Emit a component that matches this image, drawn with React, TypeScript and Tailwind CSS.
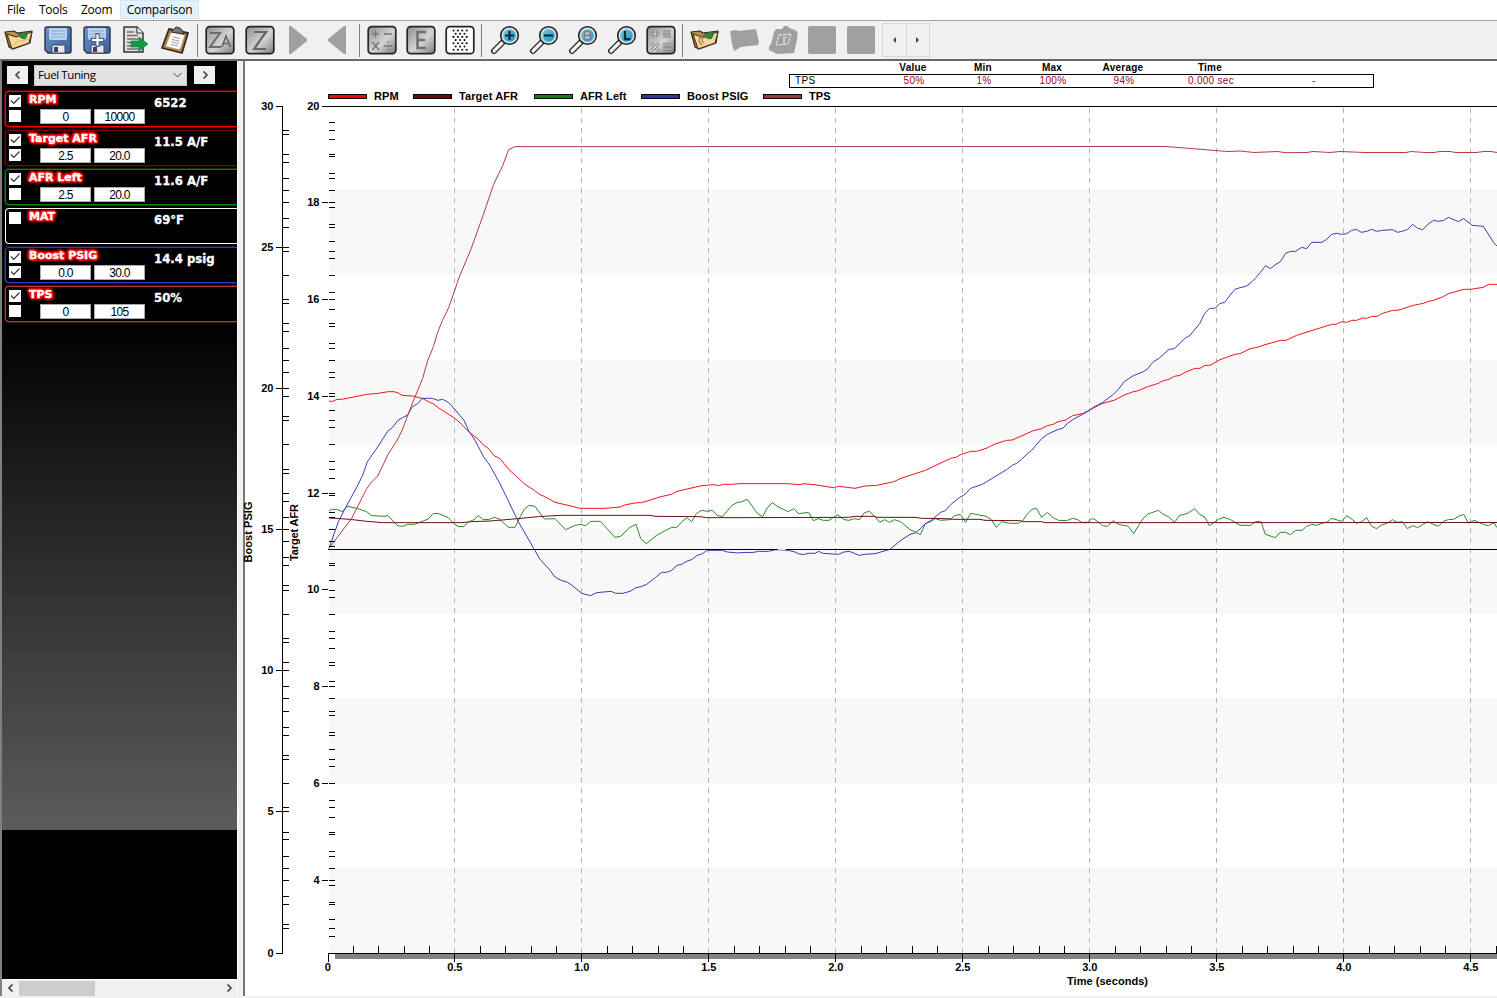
import React from "react";

type Pt = [number, number];

// Samples are stored in thirds of a pixel, relative to a local origin.
const seg = (ox: number, oy: number, flat: number[]): Pt[] => {
  const out: Pt[] = [];
  for (let i = 0; i < flat.length; i += 2) out.push([ox + flat[i] / 3, oy + flat[i + 1] / 3]);
  return out;
};

const rpm: Pt[] = [
  ...seg(325, 370, [12, 93, 20, 95, 34, 89, 56, 87, 125, 73, 160, 70, 190, 65, 207, 65, 220, 69, 231, 76, 262, 78, 292, 85, 310, 95, 324, 101, 340, 113, 388, 144, 410, 163, 432, 186, 460, 208, 475, 225, 490, 235, 507, 257, 524, 265, 552, 299, 600, 343, 628, 361, 645, 374, 658, 379, 690, 397, 738, 408, 765, 415, 840, 415, 886, 411, 902, 404, 937, 398, 950, 398, 1008, 380, 1040, 373, 1056, 364, 1130, 347, 1168, 344, 1180, 347, 1195, 343, 1222, 343, 1242, 341]),
  ...seg(740, 360, [0, 371, 140, 371, 180, 374, 190, 371, 222, 374, 280, 383, 296, 379, 345, 385, 375, 378, 410, 376, 462, 365, 480, 356, 556, 331, 632, 295, 648, 292, 662, 284, 692, 274, 710, 274, 741, 264, 765, 252, 800, 241, 817, 240, 880, 212, 905, 206, 922, 197, 940, 193, 954, 185, 975, 181, 998, 167, 1030, 160, 1060, 144, 1085, 131, 1122, 121, 1155, 104, 1180, 95, 1195, 92, 1225, 79]),
  ...seg(1150, 200, [0, 558, 25, 550, 40, 542, 57, 538, 73, 529, 90, 526, 105, 517, 135, 505, 150, 505, 165, 496, 180, 496, 210, 479, 255, 463, 270, 461, 300, 446, 322, 442, 345, 434, 392, 421, 408, 421, 440, 406, 545, 373, 558, 373, 575, 365, 590, 367, 605, 361, 620, 361, 637, 354, 650, 355, 665, 349, 682, 349, 695, 341, 728, 331, 743, 331, 790, 316, 820, 310, 835, 304, 850, 301, 880, 290, 895, 281, 942, 268, 962, 268, 1000, 262, 1016, 253, 1041, 253]),
];

const targetAfr: Pt[] = [
  ...seg(325, 370, [12, 444, 75, 448, 125, 454, 175, 458, 410, 458, 440, 455, 495, 453, 555, 448, 640, 440, 705, 436, 975, 436, 990, 439, 1125, 440, 1145, 443, 1242, 443]),
  ...seg(740, 360, [0, 473, 325, 472, 345, 469, 405, 469, 410, 472, 525, 472, 545, 475, 620, 476, 640, 478, 720, 478, 735, 481, 840, 482, 850, 485, 905, 485, 915, 488, 1242, 488]),
  [1497, 522.5],
];

const afrLeft: Pt[] = [
  ...seg(325, 370, [12, 423, 20, 418, 35, 418, 52, 425, 66, 409, 95, 415, 125, 425, 140, 437, 180, 439, 188, 436, 218, 467, 234, 469, 248, 463, 268, 463, 310, 447, 325, 430, 342, 431, 370, 443, 390, 464, 402, 470, 417, 470, 430, 456, 447, 449, 460, 437, 475, 449, 492, 448, 508, 442, 523, 447, 550, 472, 570, 472, 586, 440, 598, 417, 613, 406, 630, 409, 658, 447, 690, 446, 722, 479, 748, 467, 765, 463, 782, 467, 797, 454, 826, 454, 870, 502, 887, 499, 915, 472, 933, 463, 947, 506, 964, 521, 995, 496, 1040, 472, 1055, 472, 1070, 456, 1086, 443, 1100, 455, 1115, 430, 1130, 421, 1147, 424, 1162, 421, 1177, 436, 1192, 440, 1222, 405, 1240, 396]),
  ...seg(740, 360, [0, 427, 22, 418, 52, 460, 68, 470, 82, 443, 97, 428, 115, 441, 145, 455, 161, 446, 176, 461, 206, 457, 220, 482, 235, 476, 250, 481, 267, 481, 293, 464, 312, 479, 327, 481, 343, 476, 359, 479, 373, 458, 388, 454, 405, 470, 419, 487, 434, 479, 448, 487, 463, 479, 482, 485, 510, 509, 541, 524, 556, 491, 572, 485, 586, 476, 602, 481, 630, 479, 645, 467, 661, 463, 677, 487, 692, 460, 738, 469, 753, 478, 769, 502, 785, 485, 810, 490, 835, 490, 848, 483, 860, 464, 876, 448, 889, 445, 905, 472, 922, 457, 938, 472, 955, 481, 980, 482, 998, 475, 1013, 479, 1025, 487, 1042, 487, 1057, 475, 1070, 482, 1087, 497, 1102, 499, 1120, 482, 1135, 493, 1165, 499, 1181, 521, 1196, 496, 1210, 475, 1225, 461]),
  ...seg(1150, 200, [0, 940, 25, 931, 40, 943, 55, 950, 74, 967, 88, 947, 115, 939, 134, 926, 149, 943, 165, 952, 178, 977, 205, 958, 222, 952, 242, 959, 270, 976, 302, 976, 316, 965, 333, 965, 346, 1003, 376, 1013, 391, 997, 407, 997, 421, 1004, 437, 991, 456, 991, 470, 979, 485, 973, 500, 976, 515, 970, 530, 967, 545, 955, 575, 964, 590, 947, 608, 959, 619, 970, 635, 965, 650, 953, 665, 979, 680, 986, 695, 975, 713, 969, 727, 959, 741, 967, 757, 965, 772, 986, 788, 977, 803, 983, 832, 965, 865, 979, 880, 964, 895, 959, 911, 958, 925, 949, 941, 943, 956, 970, 972, 961, 1000, 973, 1015, 977, 1032, 968, 1041, 983]),
];

const boost: Pt[] = [
  ...seg(325, 370, [12, 535, 40, 455, 66, 405, 95, 352, 113, 316, 127, 275, 158, 231, 188, 184, 203, 172, 218, 152, 232, 143, 247, 136, 262, 110, 278, 101, 292, 85, 322, 85, 338, 91, 353, 88, 370, 97, 390, 119, 417, 151, 432, 184, 450, 211, 476, 261, 492, 282, 525, 341, 580, 455, 645, 568, 672, 597, 690, 621, 708, 631, 728, 637, 745, 649, 770, 670, 796, 677, 815, 668, 858, 664, 872, 670, 893, 670, 915, 664, 933, 653, 948, 650, 965, 643, 992, 622, 1010, 607, 1025, 607, 1040, 601, 1056, 586, 1070, 583, 1085, 574, 1102, 568, 1115, 557, 1132, 551, 1147, 541, 1192, 541, 1207, 546, 1240, 549]),
  ...seg(740, 360, [0, 578, 42, 577, 55, 574, 85, 574, 108, 569, 145, 571, 165, 576, 175, 581, 190, 584, 205, 580, 225, 580, 236, 574, 248, 580, 295, 583, 312, 576, 328, 574, 343, 580, 358, 586, 375, 583, 405, 581, 450, 568, 480, 543, 510, 523, 525, 519, 540, 507, 556, 491, 573, 481, 602, 457, 616, 452, 632, 434, 655, 415, 675, 403, 692, 385, 727, 373, 800, 329, 817, 316, 830, 310, 845, 298, 860, 283, 875, 271, 905, 236, 922, 223, 955, 208, 968, 205, 983, 190, 998, 179, 1042, 155, 1060, 142, 1087, 128, 1120, 103, 1135, 88, 1153, 65, 1180, 47, 1210, 35, 1225, 25]),
  ...seg(1150, 200, [0, 497, 12, 484, 27, 475, 57, 448, 73, 446, 105, 415, 120, 406, 149, 371, 164, 340, 179, 325, 195, 325, 209, 311, 224, 307, 240, 286, 255, 268, 270, 263, 288, 259, 302, 249, 318, 233, 347, 197, 361, 206, 375, 195, 391, 185, 407, 160, 422, 154, 437, 154, 455, 142, 470, 146, 485, 127, 516, 127, 530, 118, 545, 103, 560, 100, 575, 103, 590, 101, 605, 91, 619, 88, 634, 97, 650, 94, 665, 88, 680, 94, 697, 91, 727, 89, 743, 97, 757, 94, 773, 88, 788, 73, 803, 85, 818, 89, 834, 73, 851, 61, 866, 64, 881, 61, 895, 52, 925, 65, 941, 56, 967, 76, 1000, 79, 1031, 128, 1041, 138]),
];

const tps: Pt[] = [
  ...seg(325, 370, [12, 535, 80, 445, 125, 356, 140, 336, 158, 318, 190, 252, 215, 213, 232, 180, 258, 110]),
  ...seg(240, 60, [548, 955, 563, 902, 580, 860, 593, 817, 607, 782, 626, 743, 640, 703, 657, 653, 693, 567, 730, 464, 761, 373, 788, 317, 806, 269, 824, 260]),
  [1165, 146.5], [1185, 148], [1215, 150.5], [1228, 151.5], [1240, 151], [1254, 152.5], [1278, 151.5], [1285, 152.7], [1307, 152.5], [1313, 151.5], [1330, 152.5], [1340, 151.5], [1365, 152.5], [1406, 152.5], [1411, 151.5], [1425, 152.5], [1434, 152.5], [1440, 151.5], [1450, 151.5], [1456, 152.5], [1476, 152.5], [1484, 151.5], [1491, 151.5], [1497, 152.5],
];

const traces = [
  { color: "#f0141e", pts: rpm },
  { color: "#2c8a2c", pts: afrLeft },
  { color: "#6e0f14", pts: targetAfr },
  { color: "#3c3cb4", pts: boost },
  { color: "#b43c46", pts: tps },
];

const range = (n: number) => Array.from({ length: n }, (_, i) => i);
const TOP = 106;
const px = (v: number) => Math.floor(v) + 0.5;

function Chart() {
  return (
    <svg width="1252" height="890" viewBox="245 106 1252 890" className="block shrink-0 overflow-visible font-['Liberation_Sans',sans-serif] text-[11px] font-bold">
      {[1, 3, 5, 7, 9].map((i) => (
        <rect key={i} x="329" y={Math.floor(TOP + i * 84.7)} width="1168" height="85" fill="#f8f8f8" />
      ))}
      <rect x="335" y="954" width="1162" height="5" fill="#848284" />
      {range(9).map((i) => (
        <line key={i} x1={px(454.5 + i * 127)} x2={px(454.5 + i * 127)} y1="108" y2="953" stroke="#b4b4b4" strokeDasharray="5 5" />
      ))}
      {traces.map((t) => (
        <polyline key={t.color} points={t.pts.map((p) => p.join(",")).join(" ")} fill="none" stroke={t.color} strokeWidth="1" />
      ))}
      <g stroke="#000" shapeRendering="crispEdges">
        <path d="M322 106.5H1497M328 549.5H1497M328 953.5H1497M282.5 106V954" />
        {range(7).map((i) => (
          <line key={i} x1="276" x2="283" y1={px(TOP + i * 141.17)} y2={px(TOP + i * 141.17)} />
        ))}
        {range(34).map((i) => (
          <line key={i} x1="283" x2="289" y1={px(130.2 + i * 24.2)} y2={px(130.2 + i * 24.2)} />
        ))}
        {range(29).map((i) => (
          <line key={i} x1="283" x2="289" y1={px(134.24 + i * 28.23)} y2={px(134.24 + i * 28.23)} />
        ))}
        {range(9).map((i) => (
          <line key={i} x1="322" x2="328" y1={px(TOP + i * 96.75)} y2={px(TOP + i * 96.75)} />
        ))}
        {range(34).map((i) => (
          <line key={i} x1="329" x2="335" y1={px(130.2 + i * 24.2)} y2={px(130.2 + i * 24.2)} />
        ))}
        {range(49).map((i) => (
          <line key={i} x1="329" x2="335" y1={px(122.94 + i * 16.94)} y2={px(122.94 + i * 16.94)} />
        ))}
        {range(47).map((i) => {
          const x = Math.max(328.5, px(327.9 + i * 25.4));
          return i % 5 === 0 ? <line key={i} x1={x} x2={x} y1="953" y2="962" /> : <line key={i} x1={x} x2={x} y1="946" y2="953" />;
        })}
      </g>
      <path d="M778 549.5H786" stroke="#e0e08c" />
      {range(7).map((i) => (
        <text key={i} x="273.5" y={Math.floor(TOP + i * 141.17) + 4} textAnchor="end">{30 - i * 5}</text>
      ))}
      {range(9).map((i) => (
        <text key={i} x="319.500" y={Math.floor(TOP + i * 96.75) + 4} textAnchor="end">{20 - i * 2}</text>
      ))}
      {range(10).map((i) => (
        <text key={i} x={327.8 + i * 127} y="971" textAnchor="middle">{i === 0 ? "0" : (i / 2).toFixed(1)}</text>
      ))}
      <text x="1107.5" y="985" textAnchor="middle" textLength="81">Time (seconds)</text>
      <text transform="translate(252 532) rotate(-90)" textAnchor="middle" textLength="61">Boost PSIG</text>
      <text transform="translate(298 532.5) rotate(-90)" textAnchor="middle" textLength="57">Target AFR</text>
    </svg>
  );
}

const Svg = ({ children }: { children: React.ReactNode }) => (
  <div className="flex w-[39px] justify-center">
    <svg width="30" height="30" viewBox="0 0 30 30" className="block">{children}</svg>
  </div>
);

const Folder = ({ swirl = false }: { swirl?: boolean }) => (
  <Svg>
    <path d="M1 7L10 6L13 8L28 6L26 18L9 24L5 22Z" fill="#b98f4c" stroke="#33291a" strokeWidth="1.200" strokeLinejoin="round" />
    <path d="M3 9L12 12L28 7L25 18L8 24Z" fill="#fcd69a" stroke="#4c3820" strokeWidth="1.100" strokeLinejoin="round" />
    <path d="M14 8L20 9L23 7L23 11L21 14L17 13Z" fill="#159447" stroke="#0c5a2c" strokeWidth=".6" />
    {swirl ? <path d="M17 11C9 9 7 16 12 20M18 13C12 11 10 15 14 18" fill="none" stroke="#8a6c48" strokeWidth="1.100" /> : <path d="M9 23L12 17L25 14" fill="none" stroke="#e0ac62" strokeWidth=".8" />}
  </Svg>
);

const Save = ({ plus = false }: { plus?: boolean }) => (
  <Svg>
    <path d="M4 2H26Q28 2 28 4V26Q28 28 26 28H5L2 25V4Q2 2 4 2Z" fill="url(#blue)" stroke="#26344c" strokeWidth="1.400" />
    <path d="M6 3H24V13Q24 15 22 15H8Q6 15 6 13Z" fill="#b9d2ee" />
    <path d="M8 6H22M8 9H22M8 12H22" stroke="#8eacd0" />
    <path d="M9 20H22V28H9Z" fill="#e6e6e6" stroke="#3a4a68" />
    <rect x="11" y="22" width="4" height="5" fill="#2b4470" />
    {plus && <path d="M15.500 8V22M8.500 15H22.500" stroke="#4a628c" strokeWidth="4.200" />}
    {plus && <path d="M15.500 9.500V20.500M10 15H21" stroke="#fff" strokeWidth="2.200" />}
  </Svg>
);

const Tile = ({ children, white = false }: { children: React.ReactNode; white?: boolean }) => (
  <Svg>
    <rect x="1.200" y="1.700" width="27.600" height="27" rx="3.500" fill={white ? "#fff" : "url(#steel)"} stroke="#242424" strokeWidth="1.700" />
    {children}
  </Svg>
);

const Magnifier = ({ children }: { children: React.ReactNode }) => (
  <Svg>
    <path d="M12 18L4 26" stroke="#222" strokeWidth="6" strokeLinecap="round" />
    <path d="M12 18L4 26" stroke="#f4f4f4" strokeWidth="3.200" strokeLinecap="round" />
    <circle cx="19.500" cy="10.500" r="8.800" fill="#d6e2e8" stroke="#222" strokeWidth="1.600" />
    <circle cx="19.500" cy="10.500" r="6.300" fill="url(#lens)" />
    {children}
  </Svg>
);

const Sep = () => <div className="mr-[3px] ml-[2px] h-[33px] w-px bg-[#808080]" />;
const dots: Pt[] = range(7).flatMap((r) => range(r % 2 ? 3 : 4).map((c): Pt => [8.5 + c * 4.4 + (r % 2) * 2.2, 5.5 + r * 3.2]));

function Toolbar() {
  return (
    <div className="flex h-[38px] items-center bg-[#f0f0f0]">
      <svg width="0" height="0" className="absolute">
        <defs>
          <linearGradient id="blue" x2="1" y2="1"><stop stopColor="#6d93c8" /><stop offset="1" stopColor="#3a5f9e" /></linearGradient>
          <linearGradient id="steel" x2="1" y2="1"><stop stopColor="#8e8e8e" /><stop offset=".55" stopColor="#d4d4d4" /><stop offset="1" stopColor="#7c7c7c" /></linearGradient>
          <linearGradient id="lens" x2="1" y2="1"><stop stopColor="#7cc4dc" /><stop offset="1" stopColor="#0f9cc4" /></linearGradient>
        </defs>
      </svg>
      <div className="-ml-px flex w-[195px]">
        <Folder />
        <Save />
        <Save plus />
        <Svg>
          <path d="M3 2H16L22 8V27H3Z" fill="#e0e0e0" stroke="#333" strokeWidth="1.500" />
          <path d="M16 2V8H22" fill="#fff" stroke="#333" strokeWidth="1.200" />
          <path d="M6 7H13M6 10.500H17M6 14H18M6 17.500H11M6 21H11M6 24H18" stroke="#707070" strokeWidth="1.300" />
          <path d="M10 16H18V12L27 19L18 26V22H10Z" fill="#119a48" stroke="#0e7a38" strokeWidth=".6" />
        </Svg>
        <Svg>
          <path d="M9 4L28 8L22 28L2 23Z" fill="#b3873f" stroke="#37291a" strokeWidth="1.800" strokeLinejoin="round" />
          <path d="M11 7L25 10L20 25L5.500 21.500Z" fill="#fafafa" stroke="#908060" strokeWidth=".6" />
          <path d="M13 12L20 13.500M12 14.500L19.500 16M11.500 17L19 18.500M11 19.500L18 21" stroke="#999" strokeWidth=".9" />
          <path d="M11 7L14 4L16 2L20 3L22 5L24 9Z" fill="#787878" stroke="#333" />
        </Svg>
      </div>
      <div className="w-[1px]" />
      <Sep />
      <div className="-ml-[1px] flex">
        <Tile>
          <path d="M5 8H15L5 22H16" fill="none" stroke="#6a6a6a" strokeWidth="2" />
          <path d="M17 22L21 11L25.500 22M18.500 18.500H24" fill="none" stroke="#6a6a6a" strokeWidth="1.700" />
        </Tile>
        <div className="pl-px"><Tile><path d="M9 7H21L9 24H21" fill="none" stroke="#666" strokeWidth="2.200" /></Tile></div>
        <Svg><path d="M5 1H7L23 14V16L7 29H5Z" fill="#a0a0a0" /></Svg>
        <Svg><path d="M23 1H21L5 14V16L21 29H23Z" fill="#a0a0a0" /></Svg>
      </div>
      <Sep />
      <div className="-ml-px flex">
        <Tile><path d="M5 9H12M8.500 5.500V12.500M17 9H25M5.500 17L12 25M12 17L5.500 25M17 21H25M21 16.500V18M21 24V25.500" stroke="#777" strokeWidth="1.600" fill="none" /></Tile>
        <Tile><path d="M20 7H11.500V23H20M11.500 15H19" fill="none" stroke="#707070" strokeWidth="2.500" /></Tile>
        <Tile white>{dots.map(([x, y], i) => <circle key={i} cx={x} cy={y} r="1.050" fill="#111" />)}</Tile>
      </div>
      <Sep />
      <Magnifier><path d="M15 10.500H24M19.500 6V15" stroke="#102a38" strokeWidth="2.200" /></Magnifier>
      <Magnifier><path d="M15 10.500H24" stroke="#102a38" strokeWidth="2.200" /></Magnifier>
      <Magnifier><path d="M16.500 6.500H21.500L22.500 8.500L21 10.300L22.500 12.500L21.500 14.500H16.500ZM17 10.500H21" fill="#b8c4d0" stroke="#84788a" strokeWidth="1.300" /></Magnifier>
      <Magnifier><path d="M18 6V14.200H23.500" fill="none" stroke="#102a38" strokeWidth="2.200" /></Magnifier>
      <Tile>
        <path d="M5 9H13M9 5V13M17 7H25M17 11H25M5 18L13 26M13 18L5 26M17 20H25M17 24H25" stroke="#707070" strokeWidth="2.800" />
        <path d="M5 9H13M9 5V13M17 7H25M17 11H25M5 18L13 26M13 18L5 26M17 20H25M17 24H25" stroke="#ddd" strokeWidth="1.200" />
      </Tile>
      <Sep />
      <div className="-ml-px"><Folder swirl /></div>
      <Svg><path d="M1 6L7 5L9 6L27 4L30 17L29 20L12 22L5 26L3 19Z" fill="#a0a0a0" /></Svg>
      <Svg>
        <path d="M8 4H14L16 1H20L21 3L27 5Q30 6 29.500 9L29 15L26 28L9 29L1 25Q0 22 3 19L6 7Z" fill="#a0a0a0" />
        <path d="M11 10L23 9L20 19L8 20Z" fill="none" stroke="#f0f0f0" strokeDasharray="3 1" />
        <path d="M16 13V19M15 12H19" stroke="#e8e8e8" strokeWidth="1.200" />
      </Svg>
      <Svg><rect x="1" y="1" width="28" height="28" rx="2" fill="#a0a0a0" /></Svg>
      <Svg><rect x="1" y="1" width="28" height="28" rx="2" fill="#a0a0a0" /></Svg>
      <div className="ml-[2px] flex h-[34px] w-[48px] border border-[#d8d8d8]">
        <div className="flex flex-1 items-center justify-center border-r border-[#d8d8d8]"><svg width="3" height="6"><path d="M3 0V6L0 3Z" fill="#444" /></svg></div>
        <div className="flex flex-1 items-center justify-center"><svg width="3" height="6"><path d="M0 0V6L3 3Z" fill="#444" /></svg></div>
      </div>
    </div>
  );
}

function Check({ on }: { on: boolean }) {
  return (
    <span className="flex h-[12px] w-[12px] items-center justify-center bg-white">
      {on && <svg width="12" height="12" viewBox="0 0 12 12"><path d="M2 5.500L4.800 8.300L10.500 2.500" fill="none" stroke="#333" strokeWidth="1.200" /></svg>}
    </span>
  );
}

// The soft outer ring gives each card the slightly thick, glowing outline of the channel colour.
const channels = [
  { name: "RPM", value: "6522", border: "border-[#ff0000] shadow-[0_0_0_1px_#600000]", a: true, b: false, lo: "0", hi: "10000" },
  { name: "Target AFR", value: "11.5 A/F", border: "border-[#780000] shadow-[0_0_0_1px_#300000]", a: true, b: true, lo: "2.5", hi: "20.0" },
  { name: "AFR Left", value: "11.6 A/F", border: "border-[#008c00] shadow-[0_0_0_1px_#003400]", a: true, b: false, lo: "2.5", hi: "20.0" },
  { name: "MAT", value: "69°F", border: "border-white", a: false },
  { name: "Boost PSIG", value: "14.4 psig", border: "border-[#3838c0] shadow-[0_0_0_1px_#141448]", a: true, b: true, lo: "0.0", hi: "30.0" },
  { name: "TPS", value: "50%", border: "border-[#bc343e] shadow-[0_0_0_1px_#461216]", a: true, b: false, lo: "0", hi: "105" },
];

const Chevron = ({ d }: { d: string }) => (
  <svg width="8" height="8" viewBox="0 0 8 8"><path d={d} fill="none" stroke="#484848" strokeWidth="1.700" /></svg>
);
const LEFT = "M5.5 .5L2 4L5.500 7.500";
const RIGHT = "M2.500 .5L6 4L2.500 7.500";

function Sidebar() {
  return (
    <div className="flex w-[237px] shrink-0 flex-col overflow-hidden border-l-2 border-[#808080] font-['Liberation_Sans',sans-serif]">
      <div className="flex h-[769px] flex-col bg-[linear-gradient(#000_0,#000_255px,#5c5c5c_100%)]">
        <div className="flex h-[30px] shrink-0 items-center pl-[5px]">
          <div className="mb-[2px] flex h-[18px] w-[21px] items-center justify-center bg-[#f0f0f0]"><Chevron d={LEFT} /></div>
          <div className="mb-[2px] ml-[6px] flex h-[21px] w-[153px] items-center justify-between border border-[#c4c4c4] bg-[#e2e2e2] pr-1 pl-[3px] font-['Open_Sans',sans-serif] text-[11.5px] tracking-[-0.4px]">
            <span>Fuel Tuning</span>
            <svg width="9" height="6" viewBox="0 0 9 6"><path d="M.5 1L4.500 5L8.500 1" fill="none" stroke="#444" /></svg>
          </div>
          <div className="mb-[2px] ml-[7px] flex h-[18px] w-[21px] items-center justify-center bg-[#f0f0f0]"><Chevron d={RIGHT} /></div>
        </div>
        <div className="flex flex-col gap-[3px] pl-[3px]">
          {channels.map((c) => (
            <div key={c.name} className={`flex h-[36px] rounded-l-[4px] border border-r-0 bg-black ${c.border}`}>
              <div className="ml-[3px] flex w-[12px] flex-col gap-[3px] pt-[3px]">
                <Check on={c.a} />
                {c.lo !== undefined && <Check on={!!c.b} />}
              </div>
              <div className="ml-[7px] w-[126px] font-['DejaVu_Sans',sans-serif] text-[11px] font-bold text-white">
                <div className="h-[17px] pl-[1px] leading-[15px] tracking-[0px] whitespace-nowrap [-webkit-text-stroke:0.4px_white] [text-shadow:0_0_2px_#f00,0_0_2px_#f00,0_0_3px_#f00,0_0_3px_#f00,0_0_4px_#f00,2px_1px_2px_#f00,-2px_-1px_2px_#f00,2px_-1px_2px_#f00,-2px_1px_2px_#f00,1px_2px_2px_#f00,-1px_-2px_2px_#f00]">{c.name}</div>
                {c.lo !== undefined && (
                  <div className="ml-[12px] flex gap-[3px] font-['Liberation_Sans',sans-serif] text-[12px] font-normal tracking-[-0.7px] text-black">
                    <span className="h-[15px] w-[51px] border border-[#aaa] bg-white text-center leading-[14px]">{c.lo}</span>
                    <span className="h-[15px] w-[51px] border border-[#aaa] bg-white text-center leading-[14px]">{c.hi}</span>
                  </div>
                )}
              </div>
              <div className="pt-[3px] font-['DejaVu_Sans',sans-serif] text-[11.700px] leading-[16px] font-bold whitespace-nowrap text-white [-webkit-text-stroke:0.3px_white]">{c.value}</div>
            </div>
          ))}
        </div>
      </div>
      <div className="h-[149px] bg-black" />
      <div className="flex h-[17px] items-center border-t border-white bg-[#f0f0f0]">
        <div className="flex w-[17px] justify-center"><Chevron d={LEFT} /></div>
        <div className="h-[15px] w-[76px] bg-[#cdcdcd]" />
        <div className="flex-1" />
        <div className="flex w-[17px] justify-center"><Chevron d={RIGHT} /></div>
      </div>
    </div>
  );
}

const legend = [
  { name: "RPM", fill: "bg-[#ff0000]", w: "w-[85px]" },
  { name: "Target AFR", fill: "bg-[#780000]", w: "w-[121px]" },
  { name: "AFR Left", fill: "bg-[#0f7d14]", w: "w-[107px]" },
  { name: "Boost PSIG", fill: "bg-[#3232b4]", w: "w-[122px]" },
  { name: "TPS", fill: "bg-[#aa323c]", w: "w-[80px]" },
];

const cols = "grid grid-cols-[89px_70px_70px_68px_74px_100px_106px]";

export default function App() {
  return (
    <div className="flex h-[998px] w-[1497px] flex-col overflow-hidden bg-[#f0f0f0] text-black">
      <div className="flex h-[20px] bg-white pl-[7px] font-['Open_Sans',sans-serif] text-[12px] leading-[19px] tracking-[-0.25px]">
        <span className="w-[32px]">File</span>
        <span className="w-[42px]">Tools</span>
        <span className="w-[39px]">Zoom</span>
        <span className="h-[19px] w-[79px] border border-[#cce8ff] bg-[#e5f1fb] text-center leading-[18px]">Comparison</span>
      </div>
      <div className="h-px bg-[#a0a0a0]" />
      <Toolbar />
      <div className="flex h-[937px] border-t-2 border-[#696969]">
        <Sidebar />
        <div className="w-[6px] shrink-0 border-l border-white bg-[#f0f0f0]" />
        <div className="flex w-[1254px] shrink-0 flex-col border-l-2 border-[#787878] bg-white font-['Liberation_Sans',sans-serif]">
          <div className="flex h-[45px] shrink-0 flex-col">
            <div className={`ml-[544px] h-[13px] w-[585px] text-center text-[10px] leading-[13px] font-bold tracking-[0.25px] ${cols}`}>
              <span /><span>Value</span><span>Min</span><span>Max</span><span>Average</span><span>Time</span><span />
            </div>
            <div className={`ml-[544px] h-[14px] w-[585px] border border-black text-center text-[10px] leading-[12px] tracking-[0.3px] text-[#a8001e] ${cols}`}>
              <span className="pl-[5px] text-left text-black">TPS</span><span>50%</span><span>1%</span><span>100%</span><span>94%</span><span>0.000 sec</span><span>-</span>
            </div>
            <div className="flex h-[16px] items-center pl-[83px] text-[11px] font-bold">
              {legend.map((l) => (
                <div key={l.name} className={`flex shrink-0 items-center gap-[7px] ${l.w}`}>
                  <span className={`h-[5px] w-[39px] shrink-0 border border-black ${l.fill}`} />
                  <span className="tracking-[0.1px] whitespace-nowrap">{l.name}</span>
                </div>
              ))}
            </div>
          </div>
          <Chart />
        </div>
      </div>
    </div>
  );
}
